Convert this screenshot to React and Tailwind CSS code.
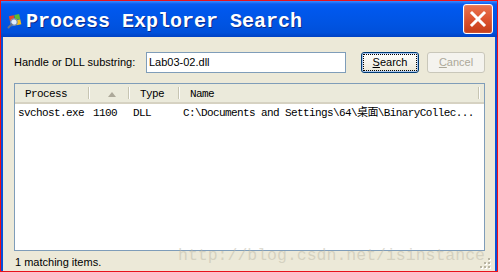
import React from 'react';

const sans = "font-['Liberation_Sans',Arial,sans-serif]";
const mono = "font-['Liberation_Mono','Noto_Sans_CJK_SC',monospace]";

function AppIcon() {
  return (
    <svg width="16" height="16" viewBox="0 0 16 16" className="shrink-0">
      <g transform="rotate(-12 8 8)">
        <rect x="3" y="2" width="5" height="5" fill="#e8472a" />
        <rect x="8.5" y="2" width="5" height="5" fill="#5cbb2e" />
        <rect x="3" y="7.5" width="5" height="5" fill="#2f6fe0" />
        <rect x="8.5" y="7.5" width="5" height="5" fill="#f5c21b" />
      </g>
      <circle cx="7" cy="9" r="3.2" fill="#dfeeff" stroke="#7b8ea8" strokeWidth="1.2" />
      <path d="M4.6 11.4 L1.5 14.5" stroke="#6b7688" strokeWidth="2" strokeLinecap="round" />
    </svg>
  );
}

function CloseButton() {
  return (
    <div className="w-[30px] h-[30px] rounded-[3px] border border-white bg-gradient-to-b from-[#e9744f] via-[#dd5430] to-[#c43d18] flex items-center justify-center shadow-[inset_0_0_2px_rgba(255,255,255,0.4)]">
      <svg width="18" height="18" viewBox="0 0 18 18">
        <path d="M3 3 L15 15 M15 3 L3 15" stroke="#fff" strokeWidth="3" strokeLinecap="square" />
      </svg>
    </div>
  );
}

function HeaderSep() {
  return <div className="absolute right-0 top-[3px] h-[12px] w-[2px] border-l border-[#c7c5b2] bg-white/90" />;
}

function ResizeGrip() {
  const dots = [
    [8, 0], [4, 4], [8, 4], [0, 8], [4, 8], [8, 8],
  ];
  return (
    <svg width="12" height="12" viewBox="0 0 12 12" className="absolute right-[3px] bottom-[1px]">
      {dots.map(([x, y], i) => (
        <g key={i}>
          <rect x={x + 1} y={y + 1} width="2" height="2" fill="#fff" />
          <rect x={x} y={y} width="2" height="2" fill="#b8b4a2" />
        </g>
      ))}
    </svg>
  );
}

export default function App() {
  return (
    <div className="w-[498px] h-[272px] bg-[#e8121b] pt-[1px] pb-[1px] px-[1px] flex flex-col relative overflow-hidden">
      {/* Title bar */}
      <div className="h-[36px] shrink-0 flex items-center pl-[6px] pr-[4px] bg-[linear-gradient(to_bottom,#3b8bff_0px,#0a5cf0_3px,#0058ee_8px,#0054e3_60%,#0050da_88%,#0042c4_100%)]">
        <div className="pt-[3px]"><AppIcon /></div>
        <div className={`${mono} ml-[3px] pt-[5px] text-white font-bold text-[20px] leading-none [text-shadow:1px_1px_0_#0a2a8a]`}>
          Process Explorer Search
        </div>
        <div className="ml-auto">
          <CloseButton />
        </div>
      </div>

      {/* Body */}
      <div className="flex-1 flex flex-col bg-[#ece9d8] border-x-2 border-[#0a4fd8] relative">
        <div className={`${sans} text-[11px] text-black flex items-center mt-[15px] pl-[11px]`}>
          <div className="w-[132px]">Handle or DLL substring:</div>
          <div className="w-[200px] h-[21px] border border-[#7f9db9] bg-white flex items-center pl-[2px]">
            Lab03-02.dll
          </div>
          <div className="ml-[15px] w-[58px] h-[21px] rounded-[3px] border border-[#003c74] bg-gradient-to-b from-white to-[#ece9d8] p-[1px] shadow-[inset_0_0_0_1px_#a9c5ee]">
            <div className="w-full h-full border border-dotted border-black flex items-center justify-center">
              <span><span className="underline">S</span>earch</span>
            </div>
          </div>
          <div className="ml-[8px] w-[58px] h-[21px] rounded-[3px] border border-[#c9c7ba] bg-[#f4f3ee] flex items-center justify-center text-[#aca899]">
            <span><span className="underline">C</span>ancel</span>
          </div>
        </div>

        {/* List view */}
        <div className={`${mono} ml-[11px] mt-[10px] w-[471px] h-[168px] border border-[#7f9db9] bg-white flex flex-col text-[11px] tracking-[-0.6px] text-black`}>
          <div className="h-[18px] shrink-0 flex bg-[#ebeadb] border-b-[2px] border-[#d6d2c2] box-content -mb-[2px] relative">
            <div className="relative w-[75px] h-[18px] flex items-center pl-[10px] pt-[3px]">Process<HeaderSep /></div>
            <div className="relative w-[40px] h-[18px] flex items-center justify-center pl-[4px] pt-[2px]">
              <svg width="8" height="5" viewBox="0 0 8 5"><path d="M4 0 L8 5 L0 5 Z" fill="#aca899" /></svg>
              <HeaderSep />
            </div>
            <div className="relative w-[50px] h-[18px] flex items-center pl-[10px] pt-[3px]">Type<HeaderSep /></div>
            <div className="relative w-[300px] h-[18px] flex items-center pl-[10px] pt-[3px]">Name<HeaderSep /></div>
          </div>
          <div className="flex h-[17px] items-center mt-[3px] whitespace-nowrap">
            <div className="w-[75px] pl-[3px]">svchost.exe</div>
            <div className="w-[40px] pl-[3px]">1100</div>
            <div className="w-[50px] pl-[3px]">DLL</div>
            <div className="pl-[3px]">C:\Documents and Settings\64\桌面\BinaryCollec...</div>
          </div>
        </div>

        <div className={`${sans} text-[11px] text-black pl-[12px] mt-[3px]`}>1 matching items.</div>

        {/* watermark */}
        <div className={`${mono} absolute left-[175px] top-[209px] text-[16.5px] leading-[20px] text-[#bdb9a8]/50 pointer-events-none`}>
          http://blog.csdn.net/isinstance
        </div>
        <ResizeGrip />
      </div>
    </div>
  );
}
